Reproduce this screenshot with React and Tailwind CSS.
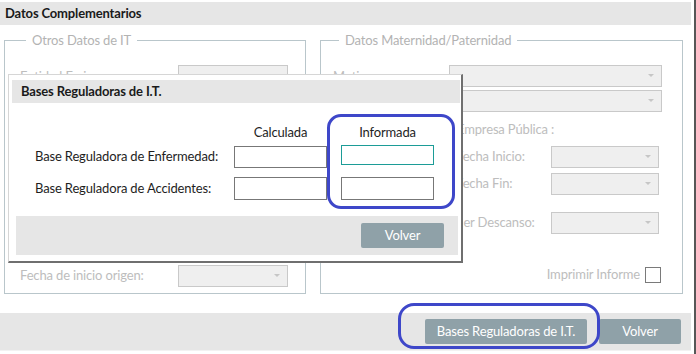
import React from 'react'

// disabled combo box used in the background form
function Combo({ className = '' }) {
  return (
    <div className={'relative h-[22px] border border-[#c9c9c9] bg-[#efefef] ' + className}>
      <span className="absolute right-[7px] top-[8px] h-0 w-0 border-x-[3px] border-t-[3px] border-x-transparent border-t-[#c6c6c6]" />
    </div>
  )
}

function Legend({ children }) {
  return <legend className="ml-[6px] px-[6px] text-[13px] leading-[16px] text-[#b3b3b3]">{children}</legend>
}

export default function App() {
  return (
    <div className="relative h-[354px] w-[696px] overflow-hidden border-r-2 border-[#575757] bg-white pr-[3px] font-['Lato','Liberation_Sans',sans-serif] text-[13px] tracking-[-0.15px] text-[#1e1e1e]">
      {/* Section header */}
      <div className="mt-[2px] flex h-[23px] items-center bg-[#e6e6e6] pl-[5px] font-bold text-[#1a1a1a]">
        Datos Complementarios
      </div>

      {/* Fieldsets */}
      <div className="mt-[7px] flex h-[262px] gap-[14px] pl-[4px]">
        <fieldset className="flex w-[302px] flex-col border border-[#b9c6cb] pb-[6px] pl-[15px]">
          <Legend>Otros Datos de IT</Legend>
          <div className="mt-[17px] flex items-center text-[#bdbdbd]">
            <span className="w-[158px] pt-[2px]">Entidad Emisora:</span>
            <Combo className="w-[110px]" />
          </div>
          <div className="mt-auto flex items-center text-[#bdbdbd]">
            <span className="w-[158px]">Fecha de inicio origen:</span>
            <Combo className="w-[110px]" />
          </div>
        </fieldset>

        <fieldset className="flex w-[363px] flex-col border border-[#b9c6cb] pl-[12px] text-[#bdbdbd]">
          <Legend>Datos Maternidad/Paternidad</Legend>
          <div className="mt-[17px] flex items-center">
            <span className="w-[116px] pt-[2px]">Motivo:</span>
            <Combo className="w-[213px]" />
          </div>
          <div className="mt-[3px] flex items-center">
            <span className="w-[116px]">Tipo:</span>
            <Combo className="w-[213px]" />
          </div>
          <div className="ml-[124px] mt-[9px] leading-[16px]">Empresa Pública :</div>
          <div className="ml-[123px] mt-[9px] flex items-center">
            <span className="w-[95px]">Fecha Inicio:</span>
            <Combo className="w-[108px]" />
          </div>
          <div className="ml-[123px] mt-[5px] flex items-center">
            <span className="w-[95px]">Fecha Fin:</span>
            <Combo className="w-[108px]" />
          </div>
          <div className="ml-[123px] mt-[17px] flex items-center">
            <span className="w-[95px]">1er Descanso:</span>
            <Combo className="w-[108px]" />
          </div>
          <div className="mr-[21px] mt-[31px] flex items-center justify-end gap-[5px]">
            <span>Imprimir Informe</span>
            <span className="h-[16px] w-[16px] border border-[#7a7a7a] bg-white" />
          </div>
        </fieldset>
      </div>

      {/* Bottom toolbar */}
      <div className="mt-[19px] flex h-[38px] items-center justify-end gap-[12px] border-b border-[#f2f2f2] bg-[#e6e6e6] pr-[10px]">
        <button className="h-[25px] w-[162px] rounded-[2px] bg-[#8fa1a8] text-white">Bases Reguladoras de I.T.</button>
        <button className="h-[25px] w-[82px] rounded-[2px] bg-[#8fa1a8] text-white">Volver</button>
      </div>

      {/* Modal dialog */}
      <div className="absolute left-[8px] top-[74px] flex h-[189px] w-[455px] flex-col border border-[#d6d6d6] border-b-2 border-r-2 border-b-[#6f6f6f] border-r-[#6f6f6f] bg-white pl-[3px] pr-[1px] pt-[5px]">
        <div className="flex h-[23px] items-center bg-[#e6e6e6] pl-[9px] font-bold text-[#1a1a1a]">
          Bases Reguladoras de I.T.
        </div>
        <div className="grid grid-cols-[185px_93px_93px] gap-x-[14px] pl-[23px]">
          <span />
          <span className="mt-[21px] text-center leading-[16px]">Calculada</span>
          <span className="mt-[21px] text-center leading-[16px]">Informada</span>

          <span className="mt-[6px] self-center">Base Reguladora de Enfermedad:</span>
          <input className="mt-[6px] h-[22px] border border-[#777] bg-white outline-none" />
          <input className="mt-[5px] h-[20px] self-start border border-[#1c9c97] bg-white outline-none" />

          <span className="mt-[9px] self-center">Base Reguladora de Accidentes:</span>
          <input className="mt-[9px] h-[23px] border border-[#777] bg-white outline-none" />
          <input className="mt-[9px] h-[23px] border border-[#777] bg-white outline-none" />
        </div>
        <div className="mb-[6px] ml-[4px] mr-[2px] mt-auto flex h-[39px] items-center justify-end bg-[#e6e6e6] pr-[14px]">
          <button className="h-[25px] w-[83px] rounded-[2px] bg-[#8fa1a8] text-white">Volver</button>
        </div>
      </div>

      {/* Highlight marks */}
      <div className="absolute left-[327px] top-[114px] h-[95px] w-[128px] rounded-[14px] border-[3px] border-[#3e47c9]" />
      <div className="absolute left-[398px] top-[303px] h-[46px] w-[202px] rounded-[16px] border-[3px] border-[#3e47c9]" />
    </div>
  )
}
